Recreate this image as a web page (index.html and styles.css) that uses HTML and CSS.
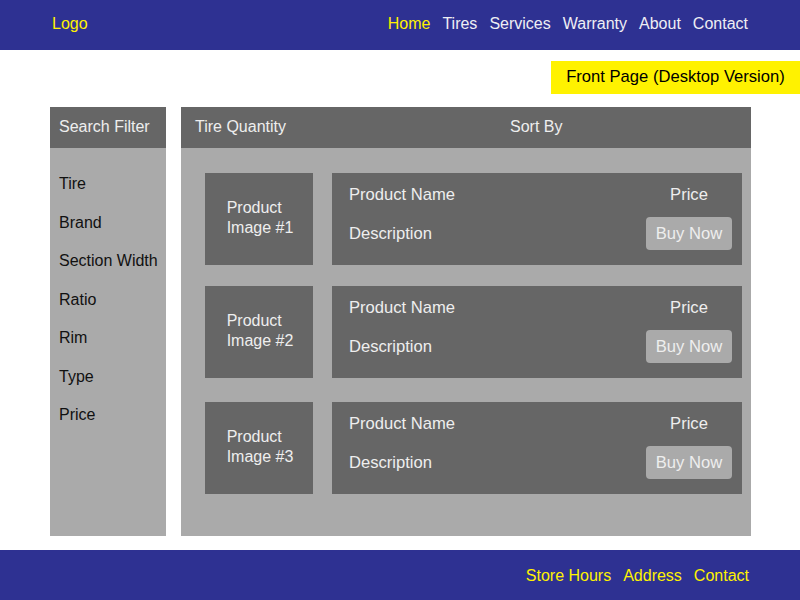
FILE: index.html
```html
<!DOCTYPE html>
<html lang="en">
<head>
<meta charset="utf-8">
<title>Front Page (Desktop Version)</title>
<link rel="stylesheet" href="styles.css">
</head>
<body>
<header class="topbar">
  <div class="logo">Logo</div>
  <nav class="nav">
    <a class="nav-link active">Home</a>
    <a class="nav-link">Tires</a>
    <a class="nav-link">Services</a>
    <a class="nav-link">Warranty</a>
    <a class="nav-link">About</a>
    <a class="nav-link">Contact</a>
  </nav>
</header>

<div class="banner-row">
  <div class="banner">Front Page (Desktop Version)</div>
</div>

<div class="content">
  <aside class="sidebar">
    <div class="panel-head">Search Filter</div>
    <ul class="filters">
      <li>Tire</li>
      <li>Brand</li>
      <li>Section Width</li>
      <li>Ratio</li>
      <li>Rim</li>
      <li>Type</li>
      <li>Price</li>
    </ul>
  </aside>

  <main class="results">
    <div class="panel-head results-head">
      <span class="qty">Tire Quantity</span>
      <span class="sort">Sort By</span>
    </div>
    <div class="products">
      <div class="product">
        <div class="thumb"><span>Product<br>Image #1</span></div>
        <div class="info">
          <div class="info-row top"><span>Product Name</span><span class="price">Price</span></div>
          <div class="info-row bottom"><span>Description</span><button class="buy">Buy Now</button></div>
        </div>
      </div>
      <div class="product">
        <div class="thumb"><span>Product<br>Image #2</span></div>
        <div class="info">
          <div class="info-row top"><span>Product Name</span><span class="price">Price</span></div>
          <div class="info-row bottom"><span>Description</span><button class="buy">Buy Now</button></div>
        </div>
      </div>
      <div class="product">
        <div class="thumb"><span>Product<br>Image #3</span></div>
        <div class="info">
          <div class="info-row top"><span>Product Name</span><span class="price">Price</span></div>
          <div class="info-row bottom"><span>Description</span><button class="buy">Buy Now</button></div>
        </div>
      </div>
    </div>
  </main>
</div>

<footer class="footer">
  <a class="foot-link">Store Hours</a>
  <a class="foot-link">Address</a>
  <a class="foot-link">Contact</a>
</footer>
</body>
</html>
```

FILE: styles.css
```css
* { box-sizing: border-box; }

html, body {
  margin: 0;
  padding: 0;
  background: #ffffff;
  font-family: "Liberation Sans", Arial, sans-serif;
  font-size: 16px;
}

.topbar {
  height: 50px;
  background: #2e3192;
  display: flex;
  align-items: center;
  justify-content: space-between;
  padding: 0 52px 2px 52px;
}

.logo {
  color: #fff200;
  line-height: 20px;
}

.nav {
  display: flex;
  gap: 12px;
}

.nav-link {
  color: #eeeef4;
  line-height: 20px;
  text-decoration: none;
}

.nav-link.active { color: #fff200; }

.banner-row {
  display: flex;
  justify-content: flex-end;
  margin-top: 11px;
}

.banner {
  width: 249px;
  height: 33px;
  line-height: 31px;
  background: #fff200;
  color: #000000;
  text-align: center;
  font-size: 16.6px;
}

.content {
  display: flex;
  gap: 15px;
  margin: 13px 0 0 50px;
  height: 429px;
}

.panel-head {
  height: 41px;
  line-height: 39px;
  background: #666666;
  color: #eeeeee;
  padding-left: 9px;
}

.sidebar {
  width: 116px;
  background: #aaaaaa;
}

.filters {
  list-style: none;
  margin: 0;
  padding: 17px 0 0 9px;
  color: #111111;
}

.filters li { line-height: 38.5px; }

.results {
  width: 570px;
  background: #aaaaaa;
}

.results-head {
  display: flex;
  padding-left: 14px;
}

.qty { width: 315px; }

.products {
  display: flex;
  flex-direction: column;
  padding: 25px 9px 0 24px;
}

.product {
  display: flex;
  gap: 19px;
  height: 92px;
}

.product + .product { margin-top: 21px; }
.product:nth-child(3) { margin-top: 24px; }

.thumb {
  width: 108px;
  background: #666666;
  color: #eeeeee;
  display: flex;
  align-items: center;
  justify-content: center;
  line-height: 19.5px;
  padding: 0 0 3px 2px;
}

.info {
  flex: 1;
  background: #666666;
  color: #eeeeee;
  padding: 12px 10px 0 17px;
  font-size: 16.6px;
}

.info-row {
  display: flex;
  justify-content: space-between;
  align-items: center;
}

.info-row.top { line-height: 20px; }

.info-row.bottom {
  margin-top: 12px;
  line-height: 33px;
}

.price {
  width: 86px;
  text-align: center;
}

.buy {
  width: 86px;
  height: 33px;
  border: 0;
  border-radius: 4px;
  background: #aaaaaa;
  color: #eeeeee;
  font-family: inherit;
  font-size: 16.6px;
  line-height: 33px;
  padding: 0;
}

.footer {
  margin-top: 14px;
  height: 50px;
  background: #2e3192;
  display: flex;
  align-items: center;
  justify-content: flex-end;
  gap: 12px;
  padding-right: 51px;
  padding-top: 1px;
}

.foot-link {
  color: #fff200;
  line-height: 20px;
  text-decoration: none;
}
```
